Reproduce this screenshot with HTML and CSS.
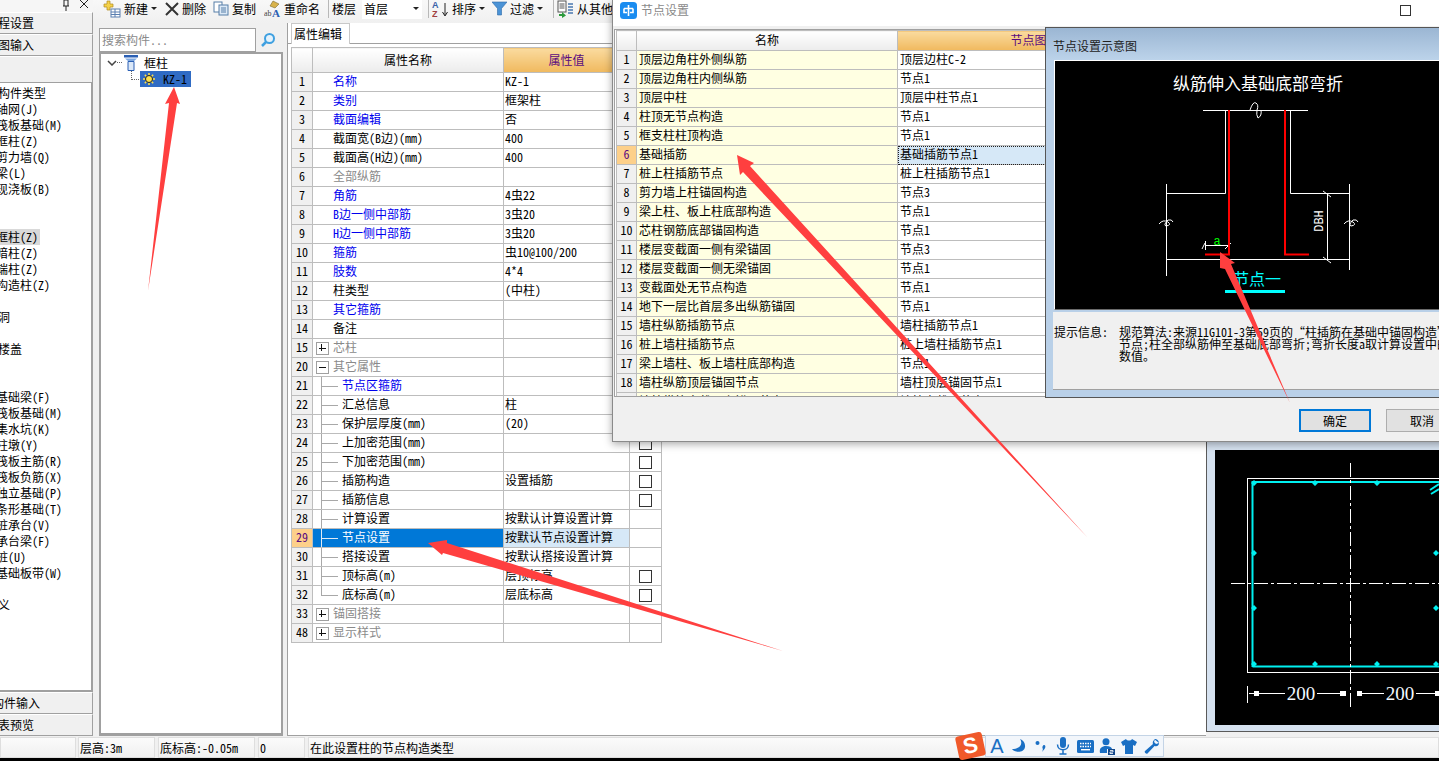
FILE: index.html
```html
<!DOCTYPE html>
<html lang="zh">
<head>
<meta charset="utf-8">
<title>节点设置</title>
<link rel="stylesheet" href="styles.css">
</head>
<body>
<div class="app">
  <div class="main">
    <aside class="nav">
      <div class="nav-top">
        <svg class="ico-pin" width="10" height="11" viewBox="0 0 10 11"><path d="M3 0v6M7 0v6M2 6h6M5 6v5M3 0h4" stroke="#222" fill="none"/></svg>
        <svg width="10" height="10" viewBox="0 0 10 10"><path d="M1 0l8 8M9 0l-8 8" stroke="#222" fill="none"/></svg>
      </div>
      <div class="nav-btn"><span class="clip-2">程设置</span></div>
      <div class="nav-btn"><span class="clip-2">图输入</span></div>
      <div class="nav-btn nav-blank"></div>
      <ul class="nav-list">
        <li class="clip-2">构件类型</li>
        <li>轴网(J)</li>
        <li>筏板基础(M)</li>
        <li>框柱(Z)</li>
        <li>剪力墙(Q)</li>
        <li>梁(L)</li>
        <li>现浇板(B)</li>
        <li></li>
        <li></li>
        <li class="sel"><span>框柱(Z)</span></li>
        <li>暗柱(Z)</li>
        <li>端柱(Z)</li>
        <li>构造柱(Z)</li>
        <li></li>
        <li class="clip-2">洞</li>
        <li></li>
        <li class="clip-2">楼盖</li>
        <li></li>
        <li></li>
        <li>基础梁(F)</li>
        <li>筏板基础(M)</li>
        <li>集水坑(K)</li>
        <li>柱墩(Y)</li>
        <li>筏板主筋(R)</li>
        <li>筏板负筋(X)</li>
        <li>独立基础(P)</li>
        <li>条形基础(T)</li>
        <li>桩承台(V)</li>
        <li>承台梁(F)</li>
        <li>桩(U)</li>
        <li>基础板带(W)</li>
        <li></li>
        <li class="clip-2">义</li>
      </ul>
      <div class="nav-btn"><span class="clip-8">构件输入</span></div>
      <div class="nav-btn"><span class="clip-2">表预览</span></div>
    </aside>

    <div class="work">
      <div class="toolbar">
        <div class="tool">
          <svg width="18" height="18" viewBox="0 0 18 18"><path d="M4 1h3v3h3v3H7v3H4V7H1V4h3z" fill="#f4d24a" stroke="#b08a20" stroke-width=".7"/><rect x="8" y="9" width="9" height="8" fill="#fff" stroke="#5a7fb0"/><path d="M8 12h9M8 14.500h9M12 9v8" stroke="#5a7fb0"/></svg>
          <span>新建</span><i class="caret"></i>
        </div>
        <div class="tool">
          <svg width="14" height="14" viewBox="0 0 14 14"><path d="M1 1l12 12M13 1L1 13" stroke="#333" stroke-width="2" fill="none"/></svg>
          <span>删除</span>
        </div>
        <div class="tool">
          <svg width="16" height="15" viewBox="0 0 16 15"><rect x="1" y="1" width="8" height="10" fill="#fff" stroke="#567ea8"/><rect x="6" y="4" width="9" height="10" fill="#dce9f6" stroke="#567ea8"/><path d="M8 7h5M8 9h5M8 11h5" stroke="#567ea8"/></svg>
          <span>复制</span>
        </div>
        <div class="tool">
          <svg width="17" height="18" viewBox="0 0 17 18"><path d="M9 1l6 3-4 4-5-2z" fill="#d8b24a" stroke="#7c6a30" stroke-width=".6"/><text x="0" y="16" class="t-ab">ab</text><text x="8" y="17" class="t-A">A</text></svg>
          <span>重命名</span>
        </div>
        <i class="sep"></i>
        <span class="floor-label">楼层</span>
        <div class="floor-select"><span>首层</span><i class="caret"></i></div>
        <i class="sep"></i>
        <div class="tool">
          <svg width="17" height="18" viewBox="0 0 17 18"><text x="0" y="8" class="t-az">A</text><text x="0" y="17" class="t-za">Z</text><path d="M13 3v12M10.500 12l2.500 4 2.500-4" stroke="#222" fill="none"/></svg>
          <span>排序</span><i class="caret"></i>
        </div>
        <div class="tool">
          <svg width="15" height="15" viewBox="0 0 15 15"><path d="M0 1h15L9.500 7.500V14H5.500V7.500z" fill="#4b93d6" stroke="#2c6aa8" stroke-width=".6"/></svg>
          <span>过滤</span><i class="caret"></i>
        </div>
        <i class="sep"></i>
        <div class="tool">
          <svg width="17" height="18" viewBox="0 0 17 18"><rect x="1" y="1" width="8" height="11" fill="#fff" stroke="#555"/><path d="M2.500 4h5M2.500 6h5M2.500 8h5" stroke="#555"/><path d="M11 4h5M11 7h5M11 10h5M11 13h5" stroke="#4a78b0" stroke-width="1.600"/><path d="M2 14h3v-2l4 3.500L5 18v-2H2z" fill="#2c9a3c"/></svg>
          <span>从其他</span>
        </div>
      </div>
      <div class="panes">
        <section class="tree-pane">
          <div class="search">
            <div class="search-box">搜索构件...</div>
            <svg class="search-ico" width="16" height="16" viewBox="0 0 16 16"><circle cx="9.500" cy="6.500" r="4.500" fill="#e4f2fc" stroke="#3fa0e0" stroke-width="2"/><path d="M6 10l-4 4" stroke="#3fa0e0" stroke-width="2.500"/></svg>
          </div>
          <div class="tree">
            <div class="tree-root">
              <svg width="10" height="6" viewBox="0 0 10 6"><path d="M1 1l4 4 4-4" stroke="#444" stroke-width="1.500" fill="none"/></svg>
              <i class="dots"></i>
              <svg width="14" height="16" viewBox="0 0 14 16"><path d="M0 0h14v2.500H0z" fill="#2a5fb4"/><path d="M1 3.500h12L9.500 6.500h-5z" fill="#7ea8e0"/><path d="M4 6.500h6V15.500H4z" fill="#dbe8f8" stroke="#2a5fb4"/></svg>
              <span>框柱</span>
            </div>
            <div class="tree-leaf">
              <svg width="12" height="12" viewBox="0 0 12 12"><circle cx="6" cy="6" r="3.500" fill="#ffe14a" stroke="#222" stroke-width="1"/><path d="M6 0v2M6 10v2M0 6h2M10 6h2M1.800 1.800l1.400 1.400M8.800 8.800l1.400 1.400M1.800 10.200l1.400-1.400M8.800 3.200l1.400-1.400" stroke="#ffe14a" stroke-width="1.500"/></svg>
              <span>KZ-1</span>
            </div>
          </div>
        </section>

        <section class="props-pane">
          <div class="tabs"><div class="tab">属性编辑</div></div>
          <table class="grid props">
            <colgroup><col class="c-num"><col class="c-name"><col class="c-val"><col class="c-ext"></colgroup>
            <thead><tr><th></th><th>属性名称</th><th class="accent">属性值</th><th></th></tr></thead>
            <tbody>
              <tr><th>1</th><td class="blue indent">名称</td><td>KZ-1</td><td></td></tr>
              <tr><th>2</th><td class="blue indent">类别</td><td>框架柱</td><td></td></tr>
              <tr><th>3</th><td class="blue indent">截面编辑</td><td>否</td><td></td></tr>
              <tr><th>4</th><td class="indent">截面宽(B边)(mm)</td><td>400</td><td></td></tr>
              <tr><th>5</th><td class="indent">截面高(H边)(mm)</td><td>400</td><td></td></tr>
              <tr><th>6</th><td class="grey indent">全部纵筋</td><td></td><td></td></tr>
              <tr><th>7</th><td class="blue indent">角筋</td><td>4虫22</td><td></td></tr>
              <tr><th>8</th><td class="blue indent">B边一侧中部筋</td><td>3虫20</td><td></td></tr>
              <tr><th>9</th><td class="blue indent">H边一侧中部筋</td><td>3虫20</td><td></td></tr>
              <tr><th>10</th><td class="blue indent">箍筋</td><td>虫10@100/200</td><td></td></tr>
              <tr><th>11</th><td class="blue indent">肢数</td><td>4*4</td><td></td></tr>
              <tr><th>12</th><td class="indent">柱类型</td><td>(中柱)</td><td></td></tr>
              <tr><th>13</th><td class="blue indent">其它箍筋</td><td></td><td></td></tr>
              <tr><th>14</th><td class="indent">备注</td><td></td><td></td></tr>
              <tr><th>15</th><td class="grey indent fold plus">芯柱</td><td></td><td></td></tr>
              <tr><th>20</th><td class="grey indent fold minus">其它属性</td><td></td><td></td></tr>
              <tr><th>21</th><td class="blue kid">节点区箍筋</td><td></td><td></td></tr>
              <tr><th>22</th><td class="kid">汇总信息</td><td>柱</td><td></td></tr>
              <tr><th>23</th><td class="kid">保护层厚度(mm)</td><td>(20)</td><td></td></tr>
              <tr><th>24</th><td class="kid">上加密范围(mm)</td><td></td><td class="ext"><i class="cb"></i></td></tr>
              <tr><th>25</th><td class="kid">下加密范围(mm)</td><td></td><td class="ext"><i class="cb"></i></td></tr>
              <tr><th>26</th><td class="kid">插筋构造</td><td>设置插筋</td><td class="ext"><i class="cb"></i></td></tr>
              <tr><th>27</th><td class="kid">插筋信息</td><td></td><td class="ext"><i class="cb"></i></td></tr>
              <tr><th>28</th><td class="kid">计算设置</td><td>按默认计算设置计算</td><td></td></tr>
              <tr class="active"><th>29</th><td class="kid">节点设置</td><td>按默认节点设置计算</td><td></td></tr>
              <tr><th>30</th><td class="kid">搭接设置</td><td>按默认搭接设置计算</td><td></td></tr>
              <tr><th>31</th><td class="kid">顶标高(m)</td><td>层顶标高</td><td class="ext"><i class="cb"></i></td></tr>
              <tr><th>32</th><td class="kid last">底标高(m)</td><td>层底标高</td><td class="ext"><i class="cb"></i></td></tr>
              <tr><th>33</th><td class="grey indent fold plus">锚固搭接</td><td></td><td></td></tr>
              <tr><th>48</th><td class="grey indent fold plus">显示样式</td><td></td><td></td></tr>
            </tbody>
          </table>
        </section>

        <section class="preview">
          <div class="preview-canvas">
            <svg width="224" height="275" viewBox="1215 450 224 275">
              <rect x="1247.500" y="478.500" width="230" height="194" fill="none" stroke="#fff"/>
              <path d="M1252.500 667V482H1450M1252.500 666.500H1450" fill="none" stroke="#00f0f0" stroke-width="2"/>
              <path d="M1430 490l9-6M1431 494l8-5" stroke="#00f0f0" stroke-width="2"/>
              <g fill="#00f0f0">
                <path d="M1254 480l3 3-3 3-3-3zM1315 480l3 3-3 3-3-3zM1377 480l3 3-3 3-3-3zM1254 550l3 3-3 3-3-3zM1254 605l3 3-3 3-3-3zM1254 661l3 3-3 3-3-3zM1315 661l3 3-3 3-3-3zM1377 661l3 3-3 3-3-3zM1436 661l3 3-3 3-3-3zM1436 550l3 3-3 3-3-3zM1436 605l3 3-3 3-3-3z"/>
              </g>
              <path d="M1350.500 463V710" stroke="#fff" stroke-dasharray="14 3 3 3"/>
              <path d="M1231 583.500H1439" stroke="#fff" stroke-dasharray="14 3 3 3"/>
              <path d="M1247.500 686V703" stroke="#fff"/>
              <path d="M1249 693.500h36M1317 693.500h26M1357 693.500h27M1416 693.500h23" stroke="#fff"/>
              <g fill="#fff">
                <rect x="1254" y="691" width="5" height="5"/><rect x="1340" y="691" width="6" height="5"/>
                <rect x="1357" y="691" width="5" height="5"/><rect x="1435" y="691" width="4" height="5"/>
              </g>
              <text x="1301" y="700" class="cad-dim">200</text>
              <text x="1400" y="700" class="cad-dim">200</text>
            </svg>
          </div>
        </section>
      </div>
    </div>
  </div>

  <footer class="status">
    <div class="cell s-a"></div>
    <div class="cell s-b">层高:3m</div>
    <div class="cell s-c">底标高:-0.05m</div>
    <div class="cell s-d">0</div>
    <div class="cell s-e">在此设置柱的节点构造类型</div>
  </footer>
  <div class="blackbar"></div>
</div>

<div class="dialog">
  <header class="dlg-title">
    <svg width="17" height="17" viewBox="0 0 17 17"><rect width="17" height="17" rx="3.500" fill="#1a8cf0"/><path d="M8.500 3v11M4 6.500h9M4 6.500v4h3M13 6.500v4h-3" stroke="#fff" stroke-width="1.600" fill="none"/></svg>
    <span>节点设置</span>
    <i class="max-btn"></i>
  </header>
  <div class="dlg-grid">
    <table class="grid nodes">
      <colgroup><col class="n-num"><col class="n-name"><col class="n-val"></colgroup>
      <thead><tr><th></th><th>名称</th><th class="accent">节点图</th></tr></thead>
      <tbody>
        <tr><th>1</th><td class="ylw">顶层边角柱外侧纵筋</td><td>顶层边柱C-2</td></tr>
        <tr><th>2</th><td class="ylw">顶层边角柱内侧纵筋</td><td>节点1</td></tr>
        <tr><th>3</th><td class="ylw">顶层中柱</td><td>顶层中柱节点1</td></tr>
        <tr><th>4</th><td class="ylw">柱顶无节点构造</td><td>节点1</td></tr>
        <tr><th>5</th><td class="ylw">框支柱柱顶构造</td><td>节点1</td></tr>
        <tr class="cur"><th>6</th><td class="ylw">基础插筋</td><td>基础插筋节点1</td></tr>
        <tr><th>7</th><td class="ylw">桩上柱插筋节点</td><td>桩上柱插筋节点1</td></tr>
        <tr><th>8</th><td class="ylw">剪力墙上柱锚固构造</td><td>节点3</td></tr>
        <tr><th>9</th><td class="ylw">梁上柱、板上柱底部构造</td><td>节点1</td></tr>
        <tr><th>10</th><td class="ylw">芯柱钢筋底部锚固构造</td><td>节点1</td></tr>
        <tr><th>11</th><td class="ylw">楼层变截面一侧有梁锚固</td><td>节点3</td></tr>
        <tr><th>12</th><td class="ylw">楼层变截面一侧无梁锚固</td><td>节点1</td></tr>
        <tr><th>13</th><td class="ylw">变截面处无节点构造</td><td>节点1</td></tr>
        <tr><th>14</th><td class="ylw">地下一层比首层多出纵筋锚固</td><td>节点1</td></tr>
        <tr><th>15</th><td class="ylw">墙柱纵筋插筋节点</td><td>墙柱插筋节点1</td></tr>
        <tr><th>16</th><td class="ylw">桩上墙柱插筋节点</td><td>桩上墙柱插筋节点1</td></tr>
        <tr><th>17</th><td class="ylw">梁上墙柱、板上墙柱底部构造</td><td>节点1</td></tr>
        <tr><th>18</th><td class="ylw">墙柱纵筋顶层锚固节点</td><td>墙柱顶层锚固节点1</td></tr>
        <tr><th>19</th><td class="ylw">墙柱纵筋变截面上锚固节点</td><td>墙柱变截面节点1</td></tr>
      </tbody>
    </table>
  </div>
  <div class="dlg-foot">
    <button class="btn primary">确定</button>
    <button class="btn">取消</button>
  </div>

  <div class="sub">
    <div class="sub-title">节点设置示意图</div>
    <div class="sub-canvas">
      <svg width="385" height="248" viewBox="1054 60 385 248">
        <text x="1258" y="90" class="cad-title">纵筋伸入基础底部弯折</text>
        <path d="M1203 110.500H1308M1225.500 110V193.500H1166M1290.500 110V193.500H1349.500M1166.500 184V276M1349.500 184V270M1166 259.500H1349.500M1327.500 193V259" fill="none" stroke="#fff"/>
        <path d="M1250 110Q1253 101 1256 103Q1259 105 1257 110Q1256 115 1258 118Q1262 116 1261 110" fill="none" stroke="#fff"/>
        <path d="M1159 224Q1163 219 1168 222Q1172 225 1166 226Q1163 225 1168 220Q1172 219 1173 222M1344 224Q1348 219 1353 222Q1357 225 1351 226Q1348 225 1353 220Q1357 219 1358 222" fill="none" stroke="#fff"/>
        <path d="M1323 191l8 6M1323 257l8 6M1205 243l-3 6M1231 243l-6 6M1205.500 241V250M1205 245.500H1230" stroke="#fff" fill="none"/>
        <path d="M1229 110V254.500H1205M1285 110V254.500H1309" fill="none" stroke="#f00" stroke-width="2"/>
        <text x="1217" y="245" class="cad-a">a</text>
        <text x="1323" y="221" class="cad-dbh" transform="rotate(-90 1323 221)">DBH</text>
        <text x="1257" y="285" class="cad-node">节点一</text>
        <rect x="1225" y="290" width="60" height="3" fill="#0ff"/>
      </svg>
    </div>
    <div class="sub-info">
      <span class="info-label">提示信息:</span>
      <p>规范算法:来源11G101-3第59页的“柱插筋在基础中锚固构造”<br>节点;柱全部纵筋伸至基础底部弯折;弯折长度a取计算设置中的<br>数值。</p>
    </div>
  </div>
</div>

<div class="ime">
  <div class="ime-logo"><span>S</span></div>
  <div class="ime-bar">
    <span class="ime-a">A</span>
    <svg width="16" height="16" viewBox="0 0 16 16"><path d="M9 1c3 4 1 10-8 10 3 4 12 4 13-2 .5-4-2-7-5-8z" fill="#1a6fc4"/></svg>
    <svg width="12" height="14" viewBox="0 0 12 14"><circle cx="2.500" cy="4" r="2" fill="#1a6fc4"/><path d="M9 6c1.500 0 2 2 .5 4L7 13c1-2 1-3 .5-4s.5-3 1.500-3z" fill="#1a6fc4"/></svg>
    <svg width="14" height="18" viewBox="0 0 14 18"><rect x="4" y="0" width="6" height="11" rx="3" fill="#1a6fc4"/><path d="M1.500 7.500c0 7 11 7 11 0M7 13v4M3.500 17h7" stroke="#1a6fc4" stroke-width="1.500" fill="none"/></svg>
    <svg width="17" height="13" viewBox="0 0 17 13"><rect width="17" height="13" rx="1.500" fill="#1a6fc4"/><path d="M3 3.500h11M3 6.500h11" stroke="#fff" stroke-width="1.400" stroke-dasharray="1.500 1"/><path d="M4 9.700h9" stroke="#fff" stroke-width="1.400"/></svg>
    <svg width="16" height="17" viewBox="0 0 16 17"><circle cx="7" cy="3.800" r="3.500" fill="#1a6fc4"/><path d="M1 15c-1-5 2-7 6-7s6 1.500 6 3H8v4z" fill="#1a6fc4"/><rect x="9" y="11" width="7" height="6" fill="#12478a"/><path d="M11 12.500h3v1.500h-3v1.500h3" stroke="#fff" fill="none" stroke-width=".8"/></svg>
    <svg width="16" height="15" viewBox="0 0 16 15"><path d="M5 0L0 3l2 4 2-1v9h8V6l2 1 2-4-5-3c-1 2-5 2-6 0z" fill="#1a6fc4"/></svg>
    <svg width="15" height="15" viewBox="0 0 15 15"><path d="M10 0c3-.500 5 2 5 4l-3 1-2-2 1-2.500c-1 .5-3 2-2 4.500L1 12c-1 1 1 3.500 2.500 2.500l7-7.500c3 1 4.500-1 4.500-3" fill="#1a6fc4"/></svg>
  </div>
</div>

<svg class="arrows" width="1439" height="761" viewBox="0 0 1439 761">
  <g fill="#ff3f3f">
    <path d="M174 87L180 104 177 103 148 291 169 103 165 104z"/>
    <path d="M737 155L754 163 750 166 1088 538 743 172 740 175z"/>
    <path d="M428 543L447 540 447 543 783 651 443 553 442 555z"/>
    <path d="M1220 252L1235 263 1231 264 1290 403 1225 269 1220 268z"/>
  </g>
</svg>
</body>
</html>
```

FILE: styles.css
```css
* { box-sizing: border-box; }
html, body { margin: 0; padding: 0; }
body {
  width: 1439px;
  height: 761px;
  overflow: hidden;
  position: relative;
  background: #f0f0f0;
  font: 12px/16px "Noto Sans Mono CJK SC", "Noto Sans CJK SC", "Liberation Sans", sans-serif;
  color: #000;
}
i { display: block; font-style: normal; }
.app { height: 761px; display: flex; flex-direction: column; }
.main { flex: 1; display: flex; min-height: 0; }

/* left navigation, cut by the screen edge */
.nav { width: 93px; flex: none; display: flex; flex-direction: column; overflow: hidden; }
.nav-top { height: 12px; display: flex; justify-content: flex-end; gap: 8px; padding-right: 4px; overflow: hidden; background: #f6f6f6; }
.nav-btn {
  height: 22px;
  flex: none;
  line-height: 20px;
  background: #f0f0f0;
  border-right: 1px solid #a0a0a0;
  border-bottom: 1px solid #a0a0a0;
  border-top: 1px solid #fff;
  white-space: nowrap;
}
.nav-blank { height: 27px; }
.nav-list {
  flex: 1;
  margin: 0;
  padding: 2px 0 0;
  list-style: none;
  background: #fff;
  border-right: 2px solid #a0a0a0;
  border-bottom: 2px solid #a0a0a0;
  overflow: hidden;
}
.nav-list li { height: 16px; margin-left: -4px; white-space: nowrap; }
.nav-list li.clip-2 { margin-left: -2px; }
.nav-list li.sel span { display: inline-block; background: #d9d9d9; padding-left: 4px; margin-left: -4px; width: 48px; }
.nav-btn span { display: block; }
.clip-2 { margin-left: -2px; }
.clip-8 { margin-left: -8px; }

/* toolbar */
.work { flex: 1; min-width: 0; display: flex; flex-direction: column; }
.toolbar {
  height: 23px;
  flex: none;
  display: flex;
  align-items: center;
  padding: 0 0 6px 10px;
  background: linear-gradient(#f8f8f8, #f0f0f0);
  white-space: nowrap;
}
.tool { display: flex; align-items: center; gap: 3px; margin-right: 8px; }
.tool:nth-child(2) { margin-right: 7px; }
.tool:nth-child(9) { margin-right: 7px; }
.tool:nth-child(10) { margin-right: 10px; }
.caret { width: 0; height: 0; border: 3px solid transparent; border-top: 3px solid #222; border-bottom: 0; }
.sep { width: 1px; height: 18px; background: #b8b8b8; margin-right: 3px; }
.floor-label { margin-right: 6px; }
.floor-select { width: 60px; height: 20px; background: #fff; display: flex; justify-content: space-between; align-items: center; padding: 0 3px 0 2px; margin-right: 6px; }
.t-ab { font: 8px "Liberation Serif", serif; fill: #444; }
.t-A { font: bold 11px "Liberation Serif", serif; fill: #2a5fb4; }
.t-az { font: bold 9px "Liberation Sans", sans-serif; fill: #3a62a8; }
.t-za { font: bold 9px "Liberation Sans", sans-serif; fill: #a04040; }

/* panes */
.panes { flex: 1; min-height: 0; display: flex; }
.tree-pane { width: 194px; flex: none; padding: 5px 4px 0 6px; display: flex; flex-direction: column; }
.search { height: 24px; display: flex; align-items: center; gap: 4px; flex: none; }
.search-box { width: 157px; height: 24px; padding: 3px 2px; background: #fff; border: 1px solid #a0a0a0; color: #8a8a8a; }
.tree { flex: 1; background: #fff; border: 2px solid #a0a0a0; border-bottom-width: 3px; border-right-width: 2px; padding: 0 0 0 6px; }
.tree-root { height: 17px; display: flex; align-items: center; }
.dots { width: 5px; border-top: 1px dotted #666; margin: 0 2px 0 0; }
.tree-root span { margin-left: 6px; }
.tree-leaf {
  position: relative;
  width: 51px;
  height: 16px;
  margin-left: 33px;
  padding-left: 3px;
  display: flex;
  align-items: center;
  gap: 8px;
  background: #2f6bc4;
  color: #000;
}
.tree-leaf::before { content: ""; position: absolute; left: -9px; top: 0; width: 9px; height: 8px; border-left: 1px dotted #666; border-bottom: 1px dotted #666; }

.props-pane { width: 919px; flex: none; background: #fff; border-left: 1px solid #a0a0a0; border-bottom: 1px solid #a0a0a0; padding: 0 0 0 3px; }
.tabs { height: 21px; background: #fff; border-bottom: 1px solid #a0a0a0; margin-left: -3px; padding-left: 3px; }
.tab { width: 59px; height: 21px; padding: 2px 0 0 2px; background: #fff; border: 1px solid #c8c8c8; border-bottom: 0; }

.grid { table-layout: fixed; border-collapse: collapse; }
.grid th, .grid td { height: 19px; padding: 0 0 2px; border: 1px solid #bdbdbd; font-weight: 400; overflow: hidden; white-space: nowrap; line-height: 16px; }
.grid thead th { background: linear-gradient(#fff, #ececec); text-align: center; }
.grid thead th.accent { background: linear-gradient(#fadb9f, #f0b95e); color: #5a0c80; }
.grid tbody th { background: #f0f0f0; text-align: center; }
.grid td { padding-left: 2px; }

.props { width: 370px; margin-top: 3px; }
.props thead tr { height: 25px; }
.props thead th { height: 25px; padding-bottom: 0; }
.c-num { width: 21px; }
.c-name { width: 191px; }
.c-val { width: 126px; }
.c-ext { width: 32px; }
.props td { padding-left: 1px; }
.props td.indent { padding-left: 20px; }
.props td.kid { padding-left: 29px; position: relative; }
.props td.kid::before { content: ""; position: absolute; left: 8px; top: 0; bottom: 0; width: 1px; background: #a8a8a8; }
.props td.kid.last::before { bottom: 9px; }
.props td.kid::after { content: ""; position: absolute; left: 8px; top: 9px; width: 17px; height: 1px; background: #a8a8a8; }
.blue { color: #0000ee; }
.grey { color: #8a8a8a; }
.fold { position: relative; }
.fold::before {
  content: "";
  position: absolute;
  left: 3px;
  top: 3px;
  width: 11px;
  height: 11px;
  border: 1px solid #a0a0a0;
  background: linear-gradient(#111, #111) center/7px 1px no-repeat;
}
.fold.plus::after { content: ""; position: absolute; left: 8px; top: 5px; width: 1px; height: 7px; background: #111; }
.ext { text-align: center; }
.grid td.ext { padding: 0; }
.cb { width: 13px; height: 13px; margin: 1px auto 0; border: 1px solid #333; background: #fff; }
.props tr.active td:nth-child(2) { background: #0078d7; color: #fff; }
.props tr.active td:nth-child(2)::before, .props tr.active td:nth-child(2)::after { background: #dfeaf5; }
.props tr.active td:nth-child(3) { background: #d6e8f7; }
.props tr.active th, .nodes tr.cur th { background: #fdd08a; color: #5a0c80; }

.preview {
  flex: 1;
  min-width: 0;
  margin-bottom: 4px;
  background: #d6e2f0;
  border-left: 1px solid #5a5a5a;
  border-bottom: 1px solid #5a5a5a;
  padding: 427px 0 7px 8px;
}
.preview-canvas { height: 275px; background: #000; overflow: hidden; }
.preview-canvas svg { display: block; }
.cad-dim { font: 19px "Liberation Serif", serif; fill: #f4faff; text-anchor: middle; }

/* status */
.status { height: 22px; flex: none; display: flex; gap: 2px; padding-top: 1px; background: #f0f0f0; }
.cell { height: 21px; padding: 2px 0 0 1px; background: linear-gradient(#fbfbfb, #f0f0f0); border: 1px solid #dedede; white-space: nowrap; }
.s-a { width: 76px; }
.s-b { width: 77px; }
.s-c { width: 97px; margin-left: 1px; }
.s-d { width: 47px; margin-left: 1px; }
.s-e { flex: 1; margin-left: 1px; }
.blackbar { height: 3px; flex: none; background: #000; }

/* dialog */
.dialog {
  position: absolute;
  left: 612px;
  top: 0;
  width: 860px;
  height: 442px;
  background: #f0f0f0;
  border-left: 1px solid #8a8a8a;
  border-bottom: 1px solid #8a8a8a;
  box-shadow: 0 2px 8px rgba(0, 0, 0, .35);
  display: flex;
  flex-direction: column;
}
.dlg-title { height: 26px; flex: none; background: #fff; display: flex; align-items: center; padding: 0 0 6px 7px; gap: 4px; color: #8a8a8a; position: relative; }
.max-btn { position: absolute; left: 787px; top: 5px; width: 11px; height: 11px; border: 1px solid #333; }
.dlg-grid { height: 368px; flex: none; margin: 3px 0 0 1px; width: 600px; background: #fff; border: 1px solid #a0a0a0; overflow: hidden; }
.nodes { width: 543px; margin-left: 1px; }
.nodes thead tr, .nodes thead th { height: 20px; }
.n-num { width: 20px; }
.n-name { width: 261px; }
.n-val { width: 262px; }
.grid td.ylw { background: #ffffe2; }
.nodes tr.cur td:nth-child(3) { background: #d6e8f7; outline: 1px dotted #222; outline-offset: -1px; }
.dlg-foot { flex: 1; display: flex; gap: 15px; align-items: flex-start; padding: 12px 0 0 686px; }
.btn { width: 72px; height: 23px; padding: 0; font: inherit; background: #e1e1e1; border: 1px solid #adadad; }
.btn.primary { border: 2px solid #0078d7; }

.sub {
  position: absolute;
  left: 432px;
  top: 27px;
  width: 420px;
  height: 371px;
  background: #b9d0e8;
  border: 1px solid #555;
  display: flex;
  flex-direction: column;
}
.sub-title { height: 32px; flex: none; padding: 10px 0 0 7px; background: linear-gradient(#9bb6d3, #bcd3ea); color: #222; }
.sub-canvas { height: 250px; flex: none; margin-left: 8px; border: 1px solid #fff; border-bottom: 1px solid #6a6a6a; border-right: 0; background: #000; }
.sub-canvas svg { display: block; margin: -1px 0 0 -1px; }
.cad-title { font-size: 17px; font-weight: 300; fill: #fff; text-anchor: middle; }
.cad-a { font: 12px "Liberation Mono", monospace; fill: #0f0; text-anchor: middle; }
.cad-dbh { font: 12px "Liberation Mono", monospace; fill: #fff; text-anchor: middle; }
.cad-node { font-size: 16px; fill: #0ff; text-anchor: middle; }
.sub-info { height: 78px; flex: none; margin: 2px 0 0 7px; background: #f0f0f0; border-bottom: 1px solid #a0a0a0; padding: 14px 0 0 1px; display: flex; line-height: 12px; white-space: nowrap; }
.info-label { width: 65px; flex: none; }
.sub-info p { margin: 0; }

/* ime */
.ime { position: absolute; left: 957px; top: 733px; display: flex; align-items: flex-start; }
.ime-logo { position: relative; z-index: 1; width: 27px; height: 24px; margin-top: 1px; background: #f0592a; border-radius: 3px; transform: rotate(-12deg); text-align: center; }
.ime-logo span { font: bold 22px/24px "Liberation Sans", sans-serif; color: #fff; }
.ime-bar { width: 179px; height: 22px; margin: 2px 0 0 1px; background: #f2f6fb; border: 1px solid #c4d4e6; display: grid; grid-template-columns: repeat(8, 22px); justify-items: center; align-items: center; }
.ime-a { font: 20px/20px "Liberation Sans", sans-serif; color: #1a6fc4; }

.arrows { position: absolute; left: 0; top: 0; pointer-events: none; }
```
